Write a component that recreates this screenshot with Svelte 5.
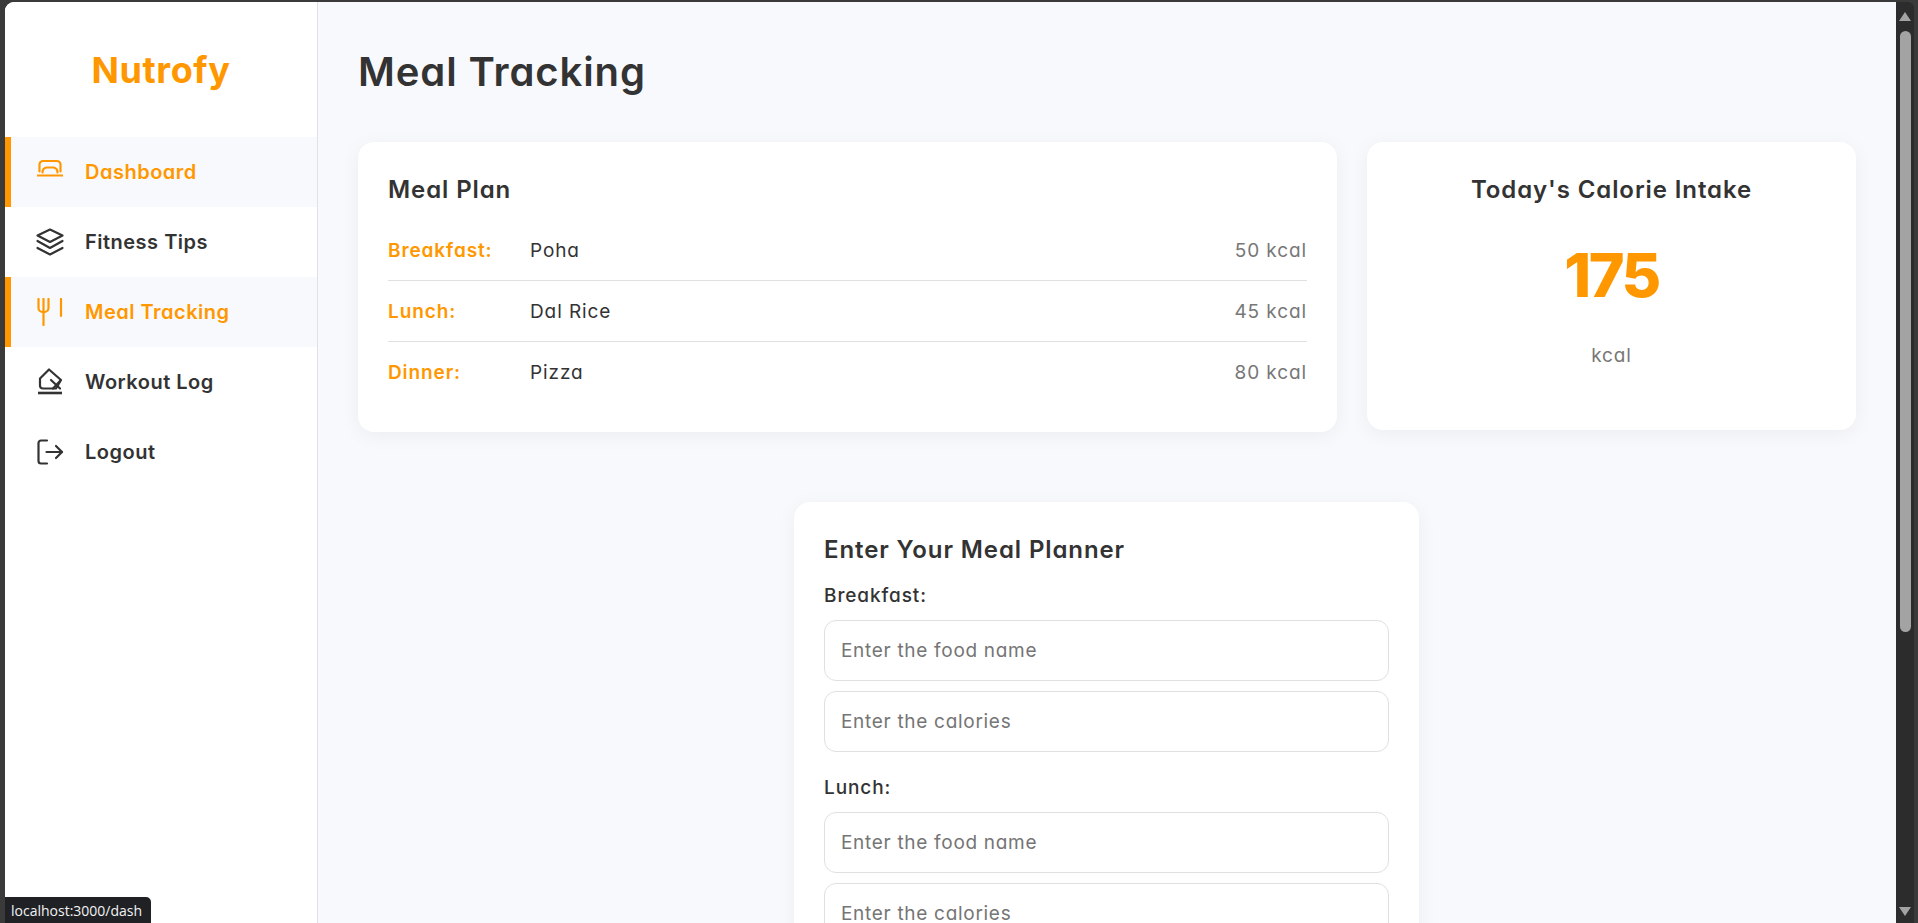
<script lang="ts">
	const navItems = [
		{ label: 'Dashboard', icon: 'dash', active: true },
		{ label: 'Fitness Tips', icon: 'layers', active: false },
		{ label: 'Meal Tracking', icon: 'fork', active: true },
		{ label: 'Workout Log', icon: 'eraser', active: false },
		{ label: 'Logout', icon: 'logout', active: false }
	];

	const meals = [
		{ name: 'Breakfast:', food: 'Poha', kcal: '50 kcal' },
		{ name: 'Lunch:', food: 'Dal Rice', kcal: '45 kcal' },
		{ name: 'Dinner:', food: 'Pizza', kcal: '80 kcal' }
	];

	const planner = ['Breakfast:', 'Lunch:', 'Dinner:'];
</script>

<div class="window">
	<div class="page">
		<aside class="sidebar">
			<div class="logo">Nutrofy</div>
			<nav>
				{#each navItems as item}
					<div class="nav-item" class:active={item.active}>
						<svg class="icon" viewBox="0 0 28 28" fill="none" stroke="currentColor" stroke-width="2.2" stroke-linecap="round" stroke-linejoin="round">
							{#if item.icon === 'dash'}
								<path d="M1 17.5h26" stroke-linecap="butt" />
								<path d="M3.5 13.5v-7a3.5 3.5 0 0 1 3.5-3.5h14a3.5 3.5 0 0 1 3.5 3.5v7" />
								<path d="M6.5 14.5a5 5 0 0 1 4-5h7a5 5 0 0 1 4 5" />
							{:else if item.icon === 'layers'}
								<path d="M14 1.5 26.5 7.5 14 14 1.5 7.5Z" />
								<path d="M1.5 13 14 20 26.5 13" />
								<path d="M1.5 20 14 26.5 26.5 20" />
							{:else if item.icon === 'fork'}
								<path d="M2.5 1v9a4 4 0 0 0 4 4h2a4 4 0 0 0 4-4V1" />
								<path d="M7.5 1v26" />
								<path d="M25 1v17" />
							{:else if item.icon === 'eraser'}
								<path d="M13 1.5 25 12l-5 8.5H7a3 3 0 0 1-3-3v-7Z" />
								<path d="M15 12l9 8.5M24 13l-7 7.5" />
								<path d="M2 25h24" stroke-width="2.6" stroke-linecap="butt" />
							{:else}
								<path d="M11 2.5H5a2.5 2.5 0 0 0-2.5 2.5v18a2.5 2.5 0 0 0 2.5 2.5h6" />
								<path d="M10.5 14H26" />
								<path d="M20 8l6 6-6 6" />
							{/if}
						</svg>
						<span>{item.label}</span>
					</div>
				{/each}
			</nav>
		</aside>

		<main class="content">
			<h1>Meal Tracking</h1>

			<div class="top-row">
				<section class="card plan">
					<h2>Meal Plan</h2>
					{#each meals as meal}
						<div class="meal-row">
							<span class="meal-name">{meal.name}</span>
							<span class="meal-food">{meal.food}</span>
							<span class="meal-kcal">{meal.kcal}</span>
						</div>
					{/each}
				</section>

				<section class="card intake">
					<h2>Today's Calorie Intake</h2>
					<div class="total">175</div>
					<div class="unit">kcal</div>
				</section>
			</div>

			<form class="card form">
				<h2>Enter Your Meal Planner</h2>
				{#each planner as meal}
					<div class="group">
						<label for={meal}>{meal}</label>
						<input id={meal} type="text" placeholder="Enter the food name" />
						<input type="text" placeholder="Enter the calories" />
					</div>
				{/each}
			</form>
		</main>
	</div>

	<div class="scrollbar">
		<span class="arrow up"></span>
		<span class="thumb"></span>
		<span class="arrow down"></span>
	</div>

	<div class="status">localhost:3000/dash</div>
</div>

<style>
	:global(body) {
		margin: 0;
		background: #3a3a3a;
		overflow: hidden;
	}

	.window {
		height: 923px;
		padding: 2px 4px 0 5px;
		box-sizing: border-box;
		display: flex;
		position: relative;
		overflow: hidden;
		font-family: Inter, 'Noto Sans', sans-serif;
		font-feature-settings: 'cv11';
		color: #333;
	}

	.page {
		flex: 1;
		display: flex;
		min-width: 0;
		background: #f8f9fd;
		border-top-left-radius: 9px;
		overflow: hidden;
	}

	.sidebar {
		width: 313px;
		flex-shrink: 0;
		background: #fff;
		border-right: 1px solid #e0e0e6;
		box-sizing: border-box;
	}

	.logo {
		height: 135px;
		display: flex;
		align-items: center;
		justify-content: center;
		font-size: 36px;
		font-weight: 700;
		color: #ff9800;
		letter-spacing: 0.6px;
		box-sizing: border-box;
	}

	.nav-item {
		height: 70px;
		display: flex;
		align-items: center;
		gap: 21px;
		padding-left: 25px;
		border-left: 6px solid transparent;
		box-sizing: border-box;
		font-size: 20px;
		font-weight: 600;
		letter-spacing: 0.5px;
	}

	.nav-item.active {
		background: #f8f9fd;
		border-left-color: #ff9800;
		color: #ff9800;
	}

	.icon {
		width: 28px;
		height: 28px;
		flex-shrink: 0;
	}

	.content {
		flex: 1;
		min-width: 0;
		padding: 40px;
		box-sizing: border-box;
	}

	h1 {
		margin: 0 0 40px;
		font-size: 40px;
		line-height: 60px;
		font-weight: 600;
		color: #333;
		letter-spacing: 0.9px;
	}

	h2 {
		margin: 0;
		font-size: 24px;
		line-height: 36px;
		font-weight: 600;
		letter-spacing: 0.9px;
	}

	.top-row {
		display: flex;
		align-items: flex-start;
		gap: 30px;
		margin-bottom: 70px;
	}

	.card {
		background: #fff;
		border-radius: 16px;
		padding: 30px;
		box-sizing: border-box;
		box-shadow: 0 4px 20px rgba(0, 0, 0, 0.05);
	}

	.plan {
		width: 979px;
		height: 290px;
	}

	.plan h2 {
		margin-bottom: 12px;
	}

	.meal-row {
		height: 61px;
		display: flex;
		align-items: center;
		font-size: 19px;
		letter-spacing: 0.9px;
		box-sizing: border-box;
		border-bottom: 1px solid #e0e0e0;
	}

	.meal-row:last-child {
		border-bottom: none;
	}

	.meal-name {
		width: 142px;
		color: #ff9800;
		font-weight: 600;
	}

	.meal-food {
		flex: 1;
	}

	.meal-kcal {
		color: #777;
	}

	.intake {
		width: 489px;
		height: 288px;
		text-align: center;
	}

	.total {
		font-size: 61px;
		font-weight: 800;
		letter-spacing: -2.5px;
		line-height: 96px;
		margin-top: 19px;
		color: #ff9800;
	}

	.unit {
		margin-top: 19px;
		font-size: 19px;
		letter-spacing: 0.9px;
		line-height: 28px;
		color: #777;
	}

	.form {
		width: 625px;
		margin-left: 436px;
	}

	.form h2 {
		margin-bottom: 14px;
	}

	.group {
		display: flex;
		flex-direction: column;
		margin-bottom: 12px;
	}

	label {
		font-size: 19px;
		letter-spacing: 0.9px;
		line-height: 28px;
		font-weight: 500;
		margin-bottom: 10px;
	}

	input {
		height: 61px;
		box-sizing: border-box;
		margin-bottom: 10px;
		padding: 0 16px;
		background: #fff;
		border: 1px solid #e0e0e0;
		border-radius: 12px;
		font-family: inherit;
		font-feature-settings: inherit;
		font-size: 19px;
		letter-spacing: 0.7px;
		color: #333;
		outline: none;
	}

	input::placeholder {
		color: #757575;
		opacity: 1;
	}

	.scrollbar {
		width: 18px;
		flex-shrink: 0;
		background: #2c2c2c;
		position: relative;
		border-top-right-radius: 6px;
	}

	.thumb {
		position: absolute;
		top: 29px;
		left: 4px;
		width: 11px;
		height: 601px;
		border-radius: 6px;
		background: #a3a3a3;
	}

	.arrow {
		position: absolute;
		left: 3px;
		width: 0;
		height: 0;
		border-left: 6.5px solid transparent;
		border-right: 6.5px solid transparent;
	}

	.arrow.up {
		top: 10px;
		border-bottom: 9px solid #a3a3a3;
	}

	.arrow.down {
		bottom: 7px;
		border-top: 9px solid #a3a3a3;
	}

	.status {
		position: absolute;
		left: 5px;
		bottom: 0;
		height: 26px;
		padding: 0 9px 0 6px;
		display: flex;
		align-items: center;
		background: #202124;
		color: #f1f3f4;
		font-family: 'Open Sans', sans-serif;
		font-size: 14px;
		border-top-right-radius: 5px;
	}
</style>
